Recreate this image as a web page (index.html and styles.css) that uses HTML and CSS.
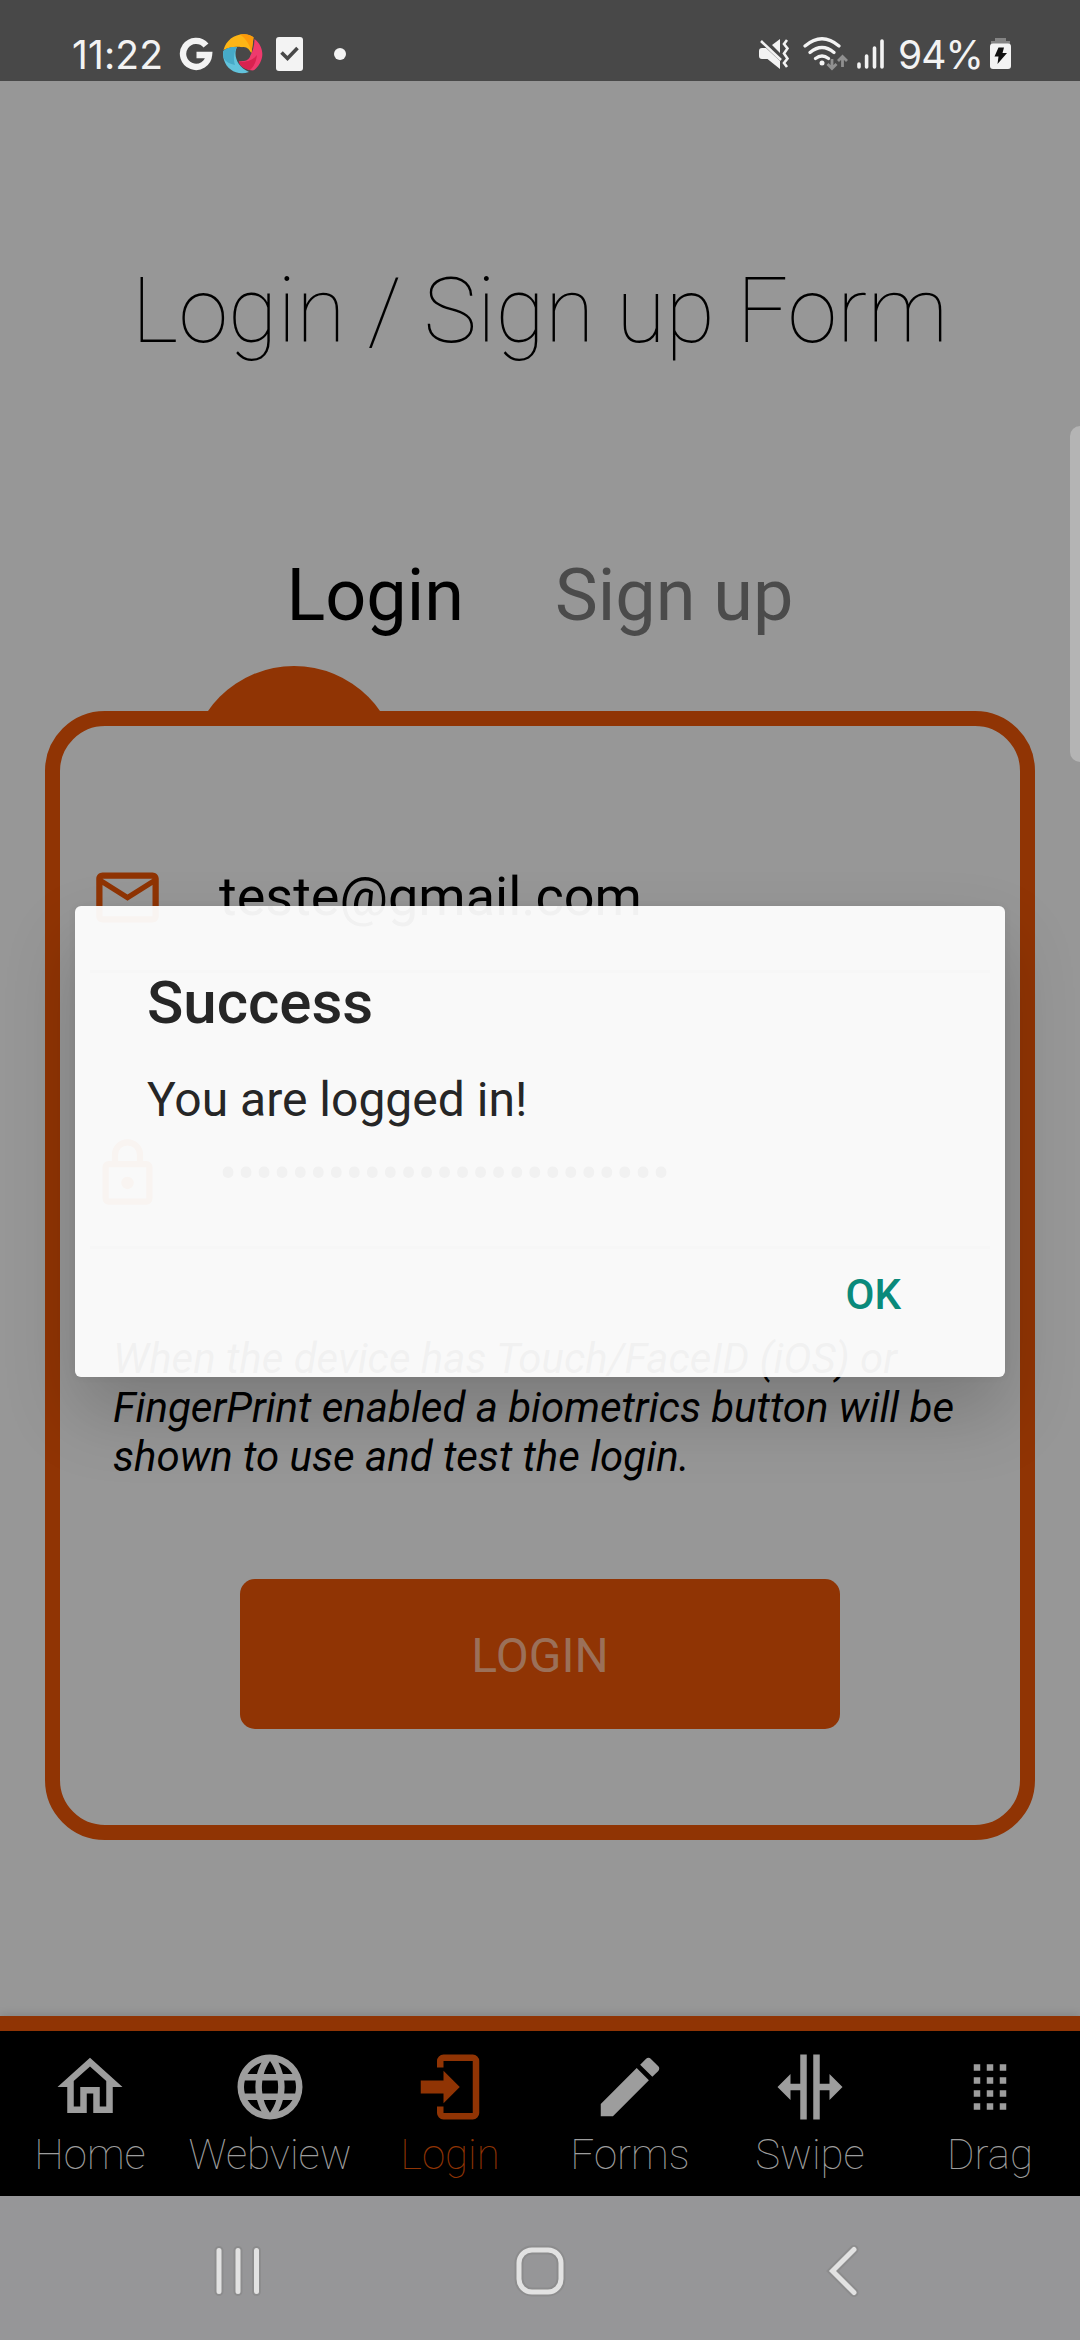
FILE: index.html
```html
<!DOCTYPE html>
<html lang="en">
<head>
<meta charset="utf-8">
<title>Login</title>
<link rel="stylesheet" href="styles.css">
</head>
<body>
<div class="screen">
  <header class="status">
    <span class="clock">11:22</span>
    <svg class="g-icon" viewBox="0 0 34 36"><path d="M27 8.5A13 13 0 1 0 30 18H17.5" fill="none" stroke="#f3f3f3" stroke-width="6.4"/></svg>
    <svg class="pinwheel" viewBox="0 0 40 40">
      <path d="M.5 16C3 6 12-.5 22 .2c3 .2 6 1.300 8.500 3L28.500 19C25 13.500 13 10 .5 16Z" fill="#fdb515"/>
      <path d="M17 .5c6-1 10 .5 13.500 2.700L28.500 19C27.500 12 23.500 5 17 .5Z" fill="#fd9a0a"/>
      <path d="M31.500 5c8 6 10 16 5.500 24-2 3.500-4 6-7 7.500C24 36 17 33 16 27c8 1.500 15-6 15.500-22Z" fill="#ef3a6d"/>
      <path d="M16 27c6 2 14-1 18-6-1 7-3 12-7 15-6-1-11-4-11-9Z" fill="#d8224f"/>
      <path d="M.3 17C4 14 9 12.600 14 13c-4 8 0 20 12 25C15 42 4 36 1 26 0 22 0 20 .3 17Z" fill="#62c3dc"/>
      <path d="M.3 17C4 14 9 12.600 14 13c-3 5-4 12-2 18-5-1-9-3-11.500-7Z" fill="#46aac8"/>
      <circle cx="20.500" cy="20" r="7" fill="#484848"/>
    </svg>
    <svg class="task" viewBox="0 0 27 34"><rect width="27" height="34" rx="3" fill="#f3f3f3"/><path d="M5.500 15.500l6 6L21.500 11" fill="none" stroke="#484848" stroke-width="3.600"/></svg>
    <i class="dot"></i>
    <span class="spacer"></span>
    <svg class="mute" viewBox="0 0 30 30"><g fill="#f3f3f3"><path d="M0 12q0-3 3-3h4l14 13v8L8.500 20H3q-3 0-3-3ZM13 6l8-6v14Z"/></g><path d="M2 2l20 19" stroke="#f3f3f3" stroke-width="2.600"/><path d="M28 1l-3 4 3.500 4.500-3.500 5 3.500 5-3.500 4.500 3 4" fill="none" stroke="#f3f3f3" stroke-width="2.600"/></svg>
    <svg class="wifi" viewBox="0 0 46 34"><g fill="none" stroke="#f3f3f3" stroke-width="3.200" stroke-linecap="round"><path d="M2 9Q19-5.500 36 9M7 15.500q12-10 24 0M12.500 21.500q6.500-5 13 0"/></g><circle cx="19" cy="26" r="2.500" fill="#f3f3f3"/><g fill="none" stroke="#909090" stroke-width="2.800"><path d="M29 22v9M24.500 27l4.500 4.500 4.500-4.500M39.500 30V20M35 24l4.500-4.500L44 24"/></g></svg>
    <svg class="signal" viewBox="0 0 27 30"><path d="M2 25v3M9.600 17v11M17.500 9v19M25 2v26" stroke="#f3f3f3" stroke-width="3.600" stroke-linecap="round"/></svg>
    <span class="percent">94%</span>
    <svg class="battery" viewBox="0 0 21 31"><path d="M5 0h11v3h4v3H1V3h4Z" fill="#848484"/><rect y="5.500" width="21" height="25.500" rx="3" fill="#f3f3f3"/><path d="M8.500 9.500h5.500L12.500 15H17L7.500 26l1-7.500H4.500Z" fill="#111"/></svg>
  </header>

  <main class="content">
    <h1 class="title">Login / Sign up Form</h1>
    <nav class="modes">
      <span class="mode active">Login</span>
      <span class="mode">Sign up</span>
    </nav>
    <section class="card">
      <div class="field">
        <svg class="mdi" viewBox="0 0 24 24"><path d="M22 6c0-1.100-.9-2-2-2H4c-1.100 0-2 .9-2 2v12c0 1.100.9 2 2 2h16c1.100 0 2-.9 2-2V6m-2 0-8 5-8-5h16m0 12H4V8l8 5 8-5v10Z"/></svg>
        <span class="value">teste@gmail.com</span>
      </div>
      <div class="field password">
        <svg class="mdi" viewBox="0 0 24 24"><path d="M12 17a2 2 0 0 1-2-2c0-1.110.89-2 2-2a2 2 0 0 1 2 2 2 2 0 0 1-2 2m6 3V10H6v10h12m0-12a2 2 0 0 1 2 2v10a2 2 0 0 1-2 2H6a2 2 0 0 1-2-2V10c0-1.110.89-2 2-2h1V6a5 5 0 0 1 5-5 5 5 0 0 1 5 5v2h1m-6-5a3 3 0 0 0-3 3v2h6V6a3 3 0 0 0-3-3Z"/></svg>
        <span class="value">•••••••••••••••••••••••••</span>
      </div>
      <p class="note">When the device has Touch/FaceID (iOS) or<br>FingerPrint enabled a biometrics button will be<br>shown to use and test the login.</p>
      <div class="login-button">LOGIN</div>
    </section>
  </main>

  <nav class="tabs">
    <div class="tab"><svg viewBox="0 0 24 24"><path d="M12 5.690l5 4.500V18h-2v-6H9v6H7v-7.810l5-4.500M12 3L2 12h3v8h6v-6h2v6h6v-8h3"/></svg><span>Home</span></div>
    <div class="tab"><svg viewBox="0 0 24 24"><path d="M16.360 14c.08-.66.14-1.320.14-2s-.06-1.340-.14-2h3.380c.16.640.26 1.310.26 2s-.1 1.360-.26 2m-5.150 5.560c.6-1.110 1.060-2.310 1.380-3.560h2.950a8.030 8.030 0 0 1-4.330 3.560M14.340 14H9.660c-.1-.66-.16-1.320-.16-2s.06-1.350.16-2h4.680c.09.65.16 1.320.16 2s-.07 1.340-.16 2M12 19.960c-.83-1.200-1.500-2.530-1.910-3.960h3.820c-.41 1.430-1.080 2.760-1.910 3.960M8 8H5.080A7.923 7.923 0 0 1 9.400 4.440C8.800 5.550 8.350 6.750 8 8m-2.920 8H8c.35 1.250.8 2.450 1.400 3.560A8.008 8.008 0 0 1 5.080 16m-.82-2C4.100 13.360 4 12.690 4 12s.1-1.360.26-2h3.380c-.08.66-.14 1.320-.14 2s.06 1.340.14 2M12 4.030c.83 1.200 1.500 2.540 1.910 3.970h-3.820c.41-1.430 1.080-2.770 1.910-3.970M18.920 8h-2.950a15.650 15.650 0 0 0-1.380-3.560c1.840.63 3.370 1.900 4.330 3.560M12 2C6.470 2 2 6.500 2 12a10 10 0 0 0 10 10 10 10 0 0 0 10-10A10 10 0 0 0 12 2Z"/></svg><span>Webview</span></div>
    <div class="tab current"><svg viewBox="0 0 24 24"><path d="M10 17v-3H3v-4h7V7l5 5-5 5m0-15h9a2 2 0 0 1 2 2v16a2 2 0 0 1-2 2h-9a2 2 0 0 1-2-2v-2h2v2h9V4h-9v2H8V4a2 2 0 0 1 2-2Z"/></svg><span>Login</span></div>
    <div class="tab"><svg viewBox="0 0 24 24"><path d="M20.710 7.040c.39-.39.39-1.040 0-1.410l-2.340-2.340c-.37-.39-1.020-.39-1.410 0l-1.840 1.830 3.750 3.750M3 17.250V21h3.750L17.810 9.930l-3.750-3.750L3 17.250Z"/></svg><span>Forms</span></div>
    <div class="tab"><svg viewBox="0 0 24 24"><path d="M18 16v-3h-3v9h-2V2h2v9h3V8l4 4-4 4M2 12l4 4v-3h3v9h2V2H9v9H6V8l-4 4Z"/></svg><span>Swipe</span></div>
    <div class="tab"><svg viewBox="0 0 24 24"><path d="M7 19v-2h2v2H7m4 0v-2h2v2h-2m4 0v-2h2v2h-2m-8-4v-2h2v2H7m4 0v-2h2v2h-2m4 0v-2h2v2h-2m-8-4V9h2v2H7m4 0V9h2v2h-2m4 0V9h2v2h-2M7 7V5h2v2H7m4 0V5h2v2h-2m4 0V5h2v2h-2Z"/></svg><span>Drag</span></div>
  </nav>

  <footer class="system">
    <svg viewBox="0 0 60 60"><path class="halo" d="M11 9.500v41M30 9.500v41M48.500 9.500v41"/><path d="M11 9.500v41M30 9.500v41M48.500 9.500v41"/></svg>
    <svg viewBox="0 0 60 60"><rect class="halo" x="9" y="9" width="42" height="42" rx="13"/><rect x="9" y="9" width="42" height="42" rx="13"/></svg>
    <svg viewBox="0 0 60 60"><path class="halo" d="M42 8.500L20.500 30 42 51.500"/><path d="M42 8.500L20.500 30 42 51.500"/></svg>
  </footer>

  <i class="edge-handle"></i>
  <div class="dialog">
    <h2 class="dialog-title">Success</h2>
    <p class="dialog-text">You are logged in!</p>
    <span class="dialog-ok">OK</span>
  </div>
</div>
</body>
</html>
```

FILE: styles.css
```css
* { box-sizing: border-box; }
body { margin: 0; font-family: Roboto, sans-serif; color: #000; }
h1, h2, p { margin: 0; font-weight: 400; }
svg { display: block; flex: none; }

.screen {
  position: relative;
  display: flex;
  flex-direction: column;
  width: 1080px;
  height: 2340px;
  overflow: hidden;
  background: #979797;
}

.status {
  display: flex;
  align-items: flex-start;
  height: 81px;
  padding: 0 69px 0 72px;
  background: #484848;
  color: #f3f3f3;
  font-family: Inter, Roboto, sans-serif;
  font-size: 39px;
  line-height: 47px;
}
.clock { width: 107px; padding-top: 31px; letter-spacing: .1px; }
.g-icon { width: 34px; height: 36px; margin-top: 37px; }
.pinwheel { width: 40px; height: 40px; margin: 34px 0 0 10px; }
.task { width: 27px; height: 34px; margin: 37px 0 0 13px; }
.dot { width: 12px; height: 12px; margin: 48px 0 0 31px; border-radius: 50%; background: #f3f3f3; }
.spacer { flex: 1; }
.mute { width: 30px; height: 30px; margin: 39px 14px 0 0; }
.wifi { width: 46px; height: 34px; margin: 37px 8px 0 0; }
.signal { width: 27px; height: 30px; margin: 39px 14px 0 0; }
.percent { width: 92px; padding-top: 31px; letter-spacing: -1px; white-space: nowrap; }
.battery { width: 21px; height: 31px; margin-top: 38px; }

.content { display: flex; flex-direction: column; height: 1935px; }
.title {
  margin-top: 178px;
  font-size: 90px;
  font-weight: 100;
  line-height: 106px;
  letter-spacing: .15px;
  text-align: center;
}
.modes {
  display: flex;
  justify-content: center;
  gap: 91px;
  margin-top: 189px;
  font-size: 72px;
  line-height: 84px;
}
.mode { color: #4b4b4b; }
.mode.active { position: relative; color: #000; }
.mode.active::after {
  content: "";
  position: absolute;
  left: -99px;
  top: 112px;
  width: 210px;
  height: 210px;
  margin-left: 1px;
  border-radius: 50%;
  background: #903404;
}
.card {
  position: relative;
  height: 1129px;
  margin: 73px 45px 0;
  padding: 134px 30px 0;
  border: 15px solid #903404;
  border-radius: 60px;
  background: #979797;
}
.field {
  display: flex;
  align-items: flex-start;
  height: 113px;
  border-bottom: 3px solid #686868;
}
.field.password { margin-top: 163px; }
.mdi { width: 75px; height: 75px; fill: #903404; }
.value { margin: 5px 0 0 54px; font-size: 54px; line-height: 63px; }
.password .value { margin-top: 6px; letter-spacing: -.18px; }
.note {
  margin: 85px 0 0 23px;
  font-size: 42px;
  font-style: italic;
  line-height: 49.2px;
  white-space: nowrap;
}
.login-button {
  width: 600px;
  height: 150px;
  margin: 97px auto 0;
  border-radius: 15px;
  background: #903404;
  color: #9b7059;
  font-size: 48px;
  line-height: 154px;
  text-align: center;
}

.tabs {
  display: flex;
  height: 180px;
  padding-top: 17px;
  border-top: 15px solid #903404;
  background: #000;
  color: #9d9d9d;
  box-shadow: 0 -2px 8px rgba(0, 0, 0, .12);
}
.tab { display: flex; flex: 1; flex-direction: column; align-items: center; font-size: 42px; font-weight: 100; line-height: 49px; }
.tab svg { width: 78px; height: 78px; fill: currentColor; }
.tab span { margin-top: 4px; }
.tab.current { color: #903404; }

.system {
  display: flex;
  justify-content: center;
  gap: 242px;
  height: 144px;
  padding-top: 45px;
  background: #969698;
}
.system svg { width: 60px; height: 60px; fill: none; stroke: #e2e2e2; stroke-width: 5; stroke-linecap: round; }
.system .halo { stroke: #8c8c8d; stroke-width: 9; }

.edge-handle {
  position: absolute;
  top: 426px;
  right: 0;
  width: 10px;
  height: 336px;
  border-radius: 10px 0 0 10px;
  background: #b4b4b4;
}

.dialog {
  position: absolute;
  left: 75px;
  top: 906px;
  display: flex;
  flex-direction: column;
  width: 930px;
  height: 471px;
  padding: 62px 104px 0 72px;
  border-radius: 6px;
  background: rgba(255, 255, 255, .947);
  box-shadow: 0 36px 72px rgba(0, 0, 0, .19), 0 0 8px rgba(0, 0, 0, .06);
  color: #262626;
}
.dialog-title { font-size: 60px; font-weight: 500; line-height: 70px; }
.dialog-text { margin-top: 34px; font-size: 48px; line-height: 56px; }
.dialog-ok { align-self: flex-end; margin-top: 142px; color: #0a8a7b; font-size: 42px; font-weight: 500; line-height: 49px; }
```
